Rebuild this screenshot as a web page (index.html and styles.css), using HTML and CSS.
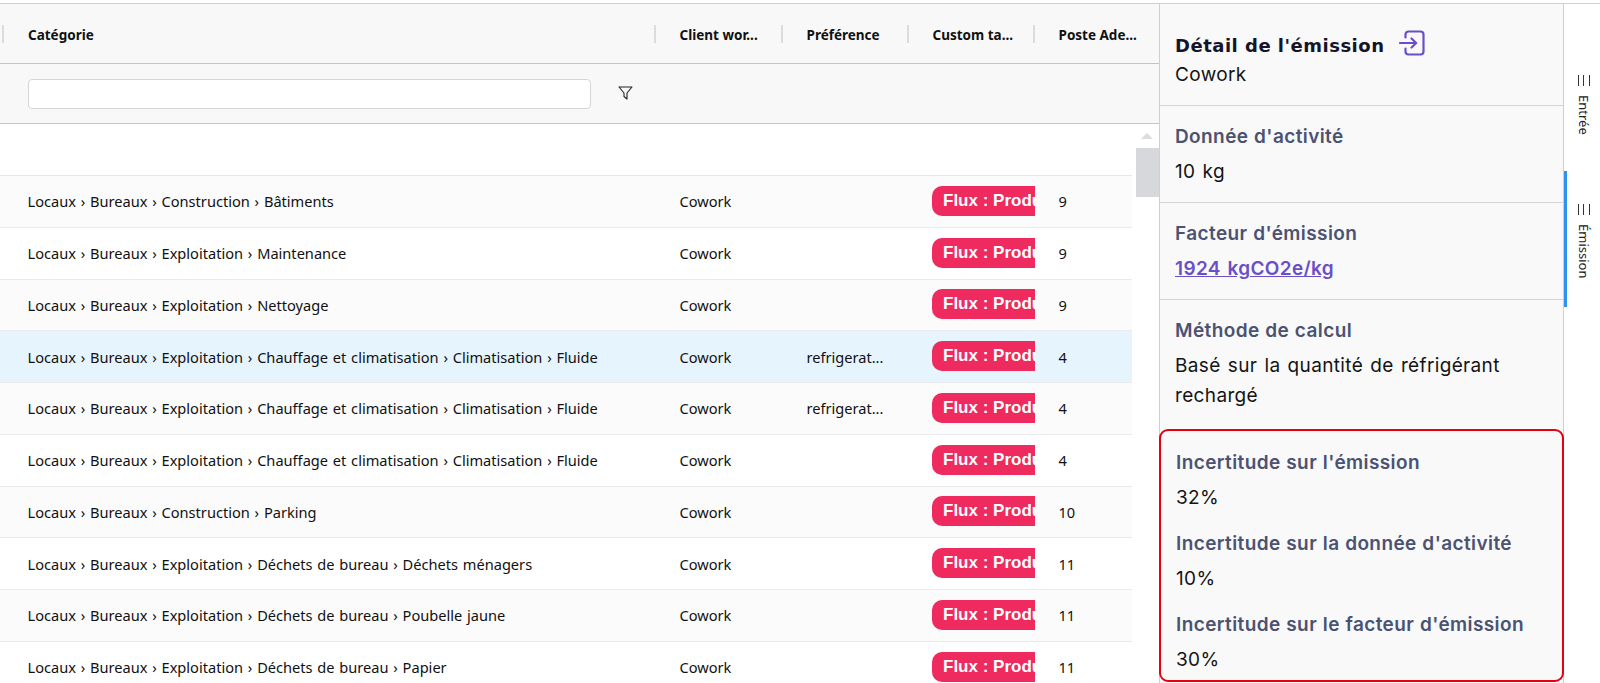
FILE: index.html
```html
<!DOCTYPE html>
<html lang="fr">
<head>
<meta charset="utf-8">
<title>Détail de l'émission</title>
<link rel="stylesheet" href="styles.css">
</head>
<body>
<div class="app">
  <main class="table">
    <div class="head">
      <div class="th"><span class="th-label">Catégorie</span></div>
      <div class="th"><span class="th-label">Client wor...</span></div>
      <div class="th"><span class="th-label">Préférence</span></div>
      <div class="th"><span class="th-label">Custom ta...</span></div>
      <div class="th"><span class="th-label">Poste Ade...</span></div>
    </div>
    <div class="filter">
      <input class="filter-input" type="text" aria-label="Filtre">
      <svg class="funnel" viewBox="0 0 15 14" width="15" height="14"><path d="M1 1H14L9 7V13L6 10.5V7Z" fill="none" stroke="#222" stroke-width="1.1" stroke-linejoin="round"/></svg>
    </div>
    <div class="body">
      <div class="rows">
        <div class="row-empty"></div>
        <div class="row alt"><div class="td">Locaux › Bureaux › Construction › Bâtiments</div><div class="td td-text">Cowork</div><div class="td td-text"></div><div class="td"><div class="pill-clip"><span class="pill">Flux : Production</span></div></div><div class="td td-text">9</div></div>
        <div class="row"><div class="td">Locaux › Bureaux › Exploitation › Maintenance</div><div class="td td-text">Cowork</div><div class="td td-text"></div><div class="td"><div class="pill-clip"><span class="pill">Flux : Production</span></div></div><div class="td td-text">9</div></div>
        <div class="row alt"><div class="td">Locaux › Bureaux › Exploitation › Nettoyage</div><div class="td td-text">Cowork</div><div class="td td-text"></div><div class="td"><div class="pill-clip"><span class="pill">Flux : Production</span></div></div><div class="td td-text">9</div></div>
        <div class="row selected"><div class="td">Locaux › Bureaux › Exploitation › Chauffage et climatisation › Climatisation › Fluide</div><div class="td td-text">Cowork</div><div class="td td-text">refrigerat...</div><div class="td"><div class="pill-clip"><span class="pill">Flux : Production</span></div></div><div class="td td-text">4</div></div>
        <div class="row alt"><div class="td">Locaux › Bureaux › Exploitation › Chauffage et climatisation › Climatisation › Fluide</div><div class="td td-text">Cowork</div><div class="td td-text">refrigerat...</div><div class="td"><div class="pill-clip"><span class="pill">Flux : Production</span></div></div><div class="td td-text">4</div></div>
        <div class="row"><div class="td">Locaux › Bureaux › Exploitation › Chauffage et climatisation › Climatisation › Fluide</div><div class="td td-text">Cowork</div><div class="td td-text"></div><div class="td"><div class="pill-clip"><span class="pill">Flux : Production</span></div></div><div class="td td-text">4</div></div>
        <div class="row alt"><div class="td">Locaux › Bureaux › Construction › Parking</div><div class="td td-text">Cowork</div><div class="td td-text"></div><div class="td"><div class="pill-clip"><span class="pill">Flux : Production</span></div></div><div class="td td-text">10</div></div>
        <div class="row"><div class="td">Locaux › Bureaux › Exploitation › Déchets de bureau › Déchets ménagers</div><div class="td td-text">Cowork</div><div class="td td-text"></div><div class="td"><div class="pill-clip"><span class="pill">Flux : Production</span></div></div><div class="td td-text">11</div></div>
        <div class="row alt"><div class="td">Locaux › Bureaux › Exploitation › Déchets de bureau › Poubelle jaune</div><div class="td td-text">Cowork</div><div class="td td-text"></div><div class="td"><div class="pill-clip"><span class="pill">Flux : Production</span></div></div><div class="td td-text">11</div></div>
        <div class="row"><div class="td">Locaux › Bureaux › Exploitation › Déchets de bureau › Papier</div><div class="td td-text">Cowork</div><div class="td td-text"></div><div class="td"><div class="pill-clip"><span class="pill">Flux : Production</span></div></div><div class="td td-text">11</div></div>
      </div>
      <div class="scrollbar">
        <div class="scroll-arrow"></div>
        <div class="scroll-thumb"></div>
      </div>
    </div>
  </main>
  <aside class="panel">
    <section class="sec sec-title">
      <div class="title-line">
        <span class="title">Détail de l'émission</span>
        <svg class="title-icon" viewBox="0 0 26 26" width="26" height="26"><path d="M6.5 7.5V4.5a3 3 0 0 1 3-3h12a3 3 0 0 1 3 3v17a3 3 0 0 1-3 3h-12a3 3 0 0 1-3-3v-3M1 13H17M12.5 8.5L17.2 13L12.5 17.5" fill="none" stroke="#6a4fc8" stroke-width="2.2" stroke-linecap="round" stroke-linejoin="round"/></svg>
      </div>
      <div class="value">Cowork</div>
    </section>
    <section class="sec">
      <div class="label">Donnée d'activité</div>
      <div class="value">10 kg</div>
    </section>
    <section class="sec">
      <div class="label">Facteur d'émission</div>
      <a class="value link" href="#">1924 kgCO2e/kg</a>
    </section>
    <section class="sec sec-plain">
      <div class="label">Méthode de calcul</div>
      <div class="value">Basé sur la quantité de réfrigérant rechargé</div>
    </section>
    <section class="uncert">
      <div class="u-item"><div class="label">Incertitude sur l'émission</div><div class="value">32%</div></div>
      <div class="u-item"><div class="label">Incertitude sur la donnée d'activité</div><div class="value">10%</div></div>
      <div class="u-item"><div class="label">Incertitude sur le facteur d'émission</div><div class="value">30%</div></div>
    </section>
  </aside>
  <nav class="rail">
    <div class="tab tab-entree"><span class="bars"></span><span class="tab-text">Entrée</span></div>
    <div class="tab tab-emission"><span class="bars"></span><span class="tab-text">Émission</span></div>
  </nav>
</div>
</body>
</html>
```
FILE: styles.css
```css
* { box-sizing: border-box; }
html, body { margin: 0; height: 683px; overflow: hidden; background: #fff; }
body { font-family: "Noto Sans", "Open Sans", sans-serif; color: #111; padding-top: 3px; }
.app { display: flex; height: 680px; border-top: 1px solid #cfd0d3; }

.table { width: 1159px; flex: none; display: flex; flex-direction: column; overflow: hidden; }
.head, .row { display: grid; grid-template-columns: 652px 127px 126px 126px 1fr; }
.head { height: 60px; background: #f8f8f8; border-bottom: 1px solid #c4c4c4; padding-left: 2px; align-items: center; }
.th { height: 18px; border-left: 2px solid #dcdcdc; padding: 2px 0 0 23.5px; display: flex; align-items: center; font-size: 13.5px; font-weight: 700; white-space: nowrap; }
.th:first-child { padding-left: 24px; }
.filter { height: 60px; background: #f8f8f8; border-bottom: 1px solid #c4c4c4; display: flex; align-items: center; padding-left: 28px; }
.filter-input { width: 563px; height: 30px; background: #fff; border: 1px solid #d6d6d6; border-radius: 4px; margin-top: 0; }
.funnel { margin-left: 27px; margin-top: -2px; }

.body { flex: 1; display: flex; min-height: 0; overflow: hidden; }
.rows { width: 1132px; flex: none; }
.row-empty { height: 52px; border-bottom: 1px solid #e6e6ee; }
.row { height: 51.75px; padding-left: 2px; align-items: center; border-bottom: 1px solid #e9e9ee; background: #fff; }
.row.alt { background: #fbfbfc; }
.row.selected { background: #e6f4fe; }
.td { padding-left: 25px; font-size: 14.6px; word-spacing: 1px; white-space: nowrap; }
.td:first-child { padding-left: 25.5px; }
.td-text { padding-left: 25.5px; }
.pill-clip { width: 103px; overflow: hidden; margin-top: -1px; }
.pill { display: inline-block; height: 30px; line-height: 29px; padding: 0 11px; background: #ee2a5e; border-radius: 10px; color: #fff; font-family: "Liberation Sans", sans-serif; font-size: 17px; font-weight: 700; word-spacing: 0; }

.scrollbar { width: 23px; margin-left: 4px; flex: none; padding-top: 9px; }
.scroll-arrow { width: 0; height: 0; margin: 0 auto; border: 6px solid transparent; border-top: 0; border-bottom: 6px solid #dcdde0; transform: translateX(-1px); }
.scroll-thumb { height: 49px; margin-top: 9px; background: #d7d8dc; }

.panel { width: 405px; flex: none; background: #f9f9f9; border-left: 1px solid #cfcfcf; border-right: 1px solid #cfcfcf; display: flex; flex-direction: column; }
.sec { padding: 16px 15px 15px; border-bottom: 1px solid #d4d4d4; }
.sec-title { padding-top: 26px; height: 102px; }
.sec-plain { border-bottom: 0; }
.title-line { display: flex; align-items: center; height: 30px; }
.title { font-family: "DejaVu Sans", sans-serif; font-size: 18px; font-weight: 700; letter-spacing: 0.5px; color: #14142b; }
.title-icon { margin-left: 15px; margin-top: -4px; }
.label { height: 30px; line-height: 30px; margin-bottom: 5px; font-family: "Inter", sans-serif; font-size: 19px; font-weight: 600; letter-spacing: 0.4px; word-spacing: 0.5px; color: #4b5272; white-space: nowrap; }
.value { line-height: 30px; font-family: "Inter", sans-serif; font-size: 19px; letter-spacing: 0.35px; word-spacing: 1.5px; color: #141414; }
.sec-title .value { height: 30px; }
.link { display: block; color: #6a4fc8; font-weight: 600; text-decoration: underline; }
.uncert { flex: 1; margin: 3px -1px 1px; padding: 17px 15px 0; border: 2px solid #e8000f; border-radius: 9px; position: relative; }
.u-item { margin-bottom: 16px; }
.u-item:last-child { margin-bottom: 0; }

.rail { flex: 1; display: flex; flex-direction: column; }
.tab { display: flex; flex-direction: column; align-items: center; }
.tab-entree { height: 167px; padding-top: 71px; }
.tab-emission { height: 136px; padding-top: 33px; border-left: 3px solid #2f93ee; }
.bars { width: 12px; height: 11px; flex: none; border-left: 1px solid #333; border-right: 1px solid #333; position: relative; margin-left: 3px; }
.bars::after { content: ""; position: absolute; left: 4.5px; top: 0; height: 100%; width: 1px; background: #333; }
.tab-emission .bars { margin-left: 0; }
.tab-text { writing-mode: vertical-rl; margin-top: 9px; margin-left: 3px; font-size: 13px; color: #222; }
.tab-emission .tab-text { margin-left: 0; }
```
